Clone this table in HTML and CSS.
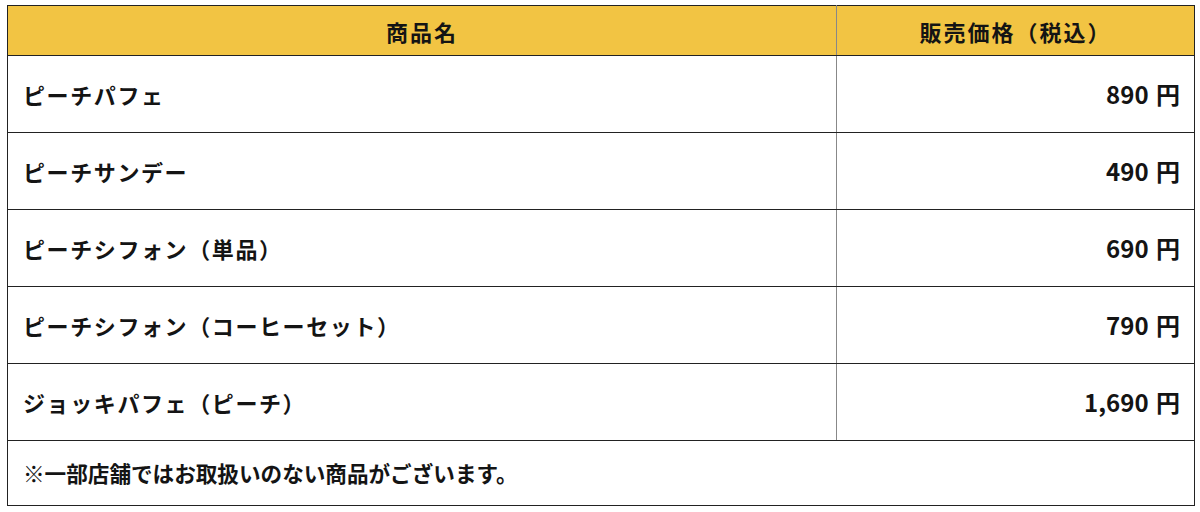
FILE: index.html
```html
<!DOCTYPE html>
<html lang="ja">
<head>
<meta charset="utf-8">
<link rel="stylesheet" href="styles.css">
</head>
<body>
<div class="wrap">
<table class="menu">
  <thead>
    <tr><th class="name-h">商品名</th><th class="price-h">販売価格（税込）</th></tr>
  </thead>
  <tbody>
    <tr><td class="name">ピーチパフェ</td><td class="price">890 円</td></tr>
    <tr><td class="name">ピーチサンデー</td><td class="price">490 円</td></tr>
    <tr><td class="name">ピーチシフォン（単品）</td><td class="price">690 円</td></tr>
    <tr><td class="name">ピーチシフォン（コーヒーセット）</td><td class="price">790 円</td></tr>
    <tr><td class="name">ジョッキパフェ（ピーチ）</td><td class="price">1,690 円</td></tr>
    <tr><td class="note" colspan="2">※一部店舗ではお取扱いのない商品がございます。</td></tr>
  </tbody>
</table>
</div>
</body>
</html>
```

FILE: styles.css
```css
html, body {
  margin: 0;
  padding: 0;
  background: #ffffff;
}
body {
  font-family: "Noto Sans CJK JP", "Noto Sans", sans-serif;
  font-weight: 700;
  color: #141414;
}
.wrap {
  padding: 5px 0 0 7px;
}
.menu {
  width: 1188px;
  border-collapse: collapse;
  border: 1px solid #222;
  table-layout: fixed;
}
.menu th, .menu td {
  padding: 0;
  font-size: 22px;
  line-height: 1;
  border-top: 1px solid #222;
  border-bottom: 1px solid #222;
}
.menu th {
  background: #f2c443;
  height: 49px;
  text-align: center;
  letter-spacing: 2px;
  font-weight: 700;
}
.name-h { width: 828px; border-right: 1px solid #888; }
.menu td { height: 76px; }
.name {
  padding-left: 15px !important;
  letter-spacing: 1.6px;
  border-right: 1px solid #888;
}
.menu td.price {
  text-align: right;
  padding-right: 14px;
  font-size: 24px;
  word-spacing: 2px;
}
.menu td.note {
  height: 64px;
  padding-left: 15px;
  font-size: 21.6px;
}
```
